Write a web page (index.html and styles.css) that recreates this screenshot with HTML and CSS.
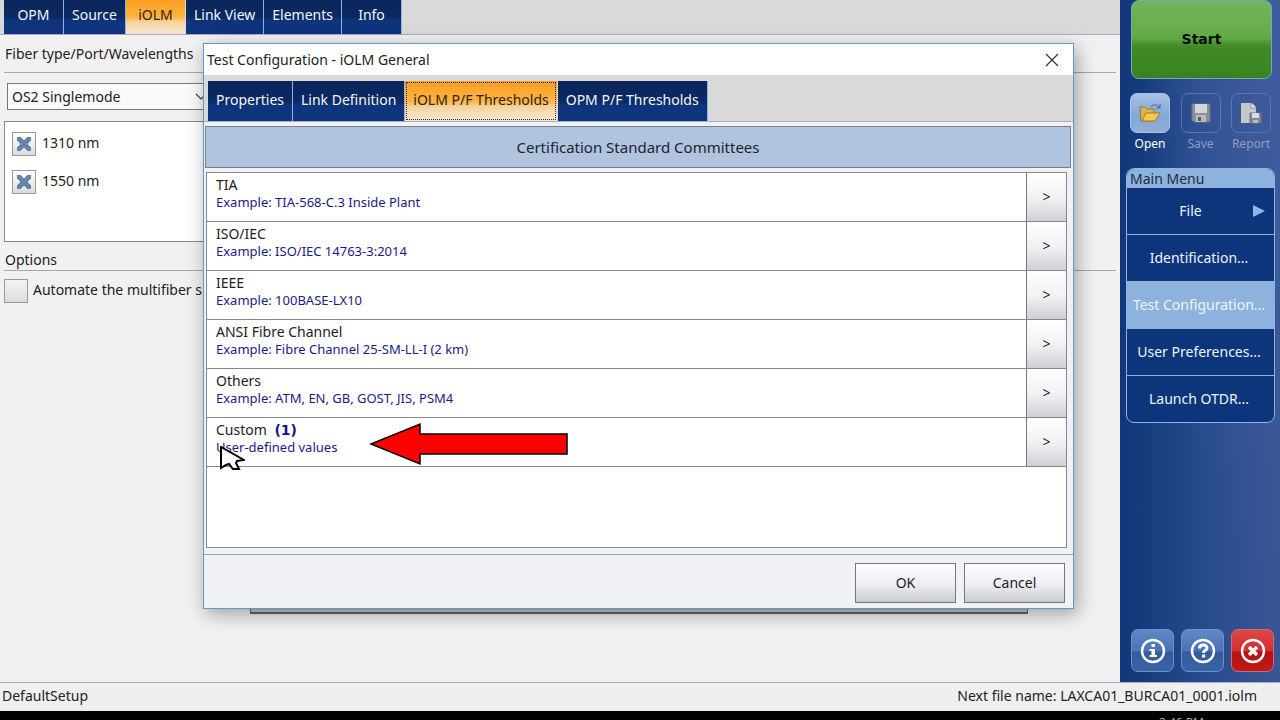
FILE: index.html
```
<!DOCTYPE html>
<html lang="en">
<head>
<meta charset="utf-8">
<title>iOLM Test Configuration</title>
<link rel="stylesheet" href="styles.css">
</head>
<body>
<div class="app">
  <main class="workspace">
    <nav class="tabs tabs-main">
      <button class="tab">OPM</button>
      <button class="tab">Source</button>
      <button class="tab active">iOLM</button>
      <button class="tab">Link View</button>
      <button class="tab">Elements</button>
      <button class="tab">Info</button>
    </nav>
    <section class="panel">
      <h2 class="group-title">Fiber type/Port/Wavelengths</h2>
      <div class="fiber-column">
        <div class="select-wrap">
          <select class="fiber-select" aria-label="Fiber type"><option>OS2 Singlemode</option></select>
          <svg class="chevron" width="12" height="8" viewBox="0 0 12 8"><path d="m1 1 5 5 5-5" fill="none" stroke="#444" stroke-width="1.200"/></svg>
        </div>
        <div class="wavelengths">
          <label class="wave"><input type="checkbox" class="check" checked><span>1310 nm</span></label>
          <label class="wave"><input type="checkbox" class="check" checked><span>1550 nm</span></label>
        </div>
      </div>
      <h2 class="group-title">Options</h2>
      <label class="option"><input type="checkbox" class="check"><span>Automate the multifiber s</span></label>
    </section>
    <div class="back-panel"></div>
  </main>

  <aside class="sidebar">
    <button class="start">Start</button>
    <div class="tools">
      <button class="tool enabled">
        <span class="tool-face"><svg width="24" height="24" viewBox="0 0 24 24">
          <path d="M2 6h5l2 2h7v12H3z" fill="#d9b457" stroke="#9a7526"/>
          <path d="M4 20 8 12h14l-5 8z" fill="#fcc750" stroke="#a97a20"/>
          <path d="M13 6c2-3 6-3 8 0M22 3v4h-4" fill="none" stroke="#47698f" stroke-width="1.200"/>
        </svg></span><span>Open</span>
      </button>
      <button class="tool" disabled>
        <span class="tool-face"><svg width="24" height="24" viewBox="0 0 24 24">
          <path d="M3 3h18v18H5l-2-2z" fill="#8b919b" stroke="#6e7481"/>
          <path d="M6 3h12v9H6z" fill="#d4d7da"/><path d="M7 14h10v7H7z" fill="#b9bdc3"/><path d="M9 16h3v4H9z" fill="#555c69"/>
        </svg></span><span>Save</span>
      </button>
      <button class="tool" disabled>
        <span class="tool-face"><svg width="24" height="24" viewBox="0 0 24 24">
          <path d="M2 2h11l4 4v16H2z" fill="#c4c7cb"/><path d="M12 2v5h5" fill="#e8e8e8" stroke="#8c929b"/>
          <path d="M11 12h11v10H11z" fill="#818894" stroke="#6a7180"/><path d="M13 12h7v5h-7z" fill="#d9dbde"/><path d="M14 19h5v3h-5z" fill="#b9bdc3"/>
        </svg></span><span>Report</span>
      </button>
    </div>
    <nav class="menu">
      <h2 class="menu-title">Main Menu</h2>
      <button class="menu-item">File
        <svg class="menu-arrow" width="13" height="12" viewBox="0 0 13 12"><path d="M1 0 13 6 1 12z" fill="#8db4e2"/></svg>
      </button>
      <button class="menu-item">Identification...</button>
      <button class="menu-item selected">Test Configuration...</button>
      <button class="menu-item">User Preferences...</button>
      <button class="menu-item">Launch OTDR...</button>
    </nav>
    <div class="system">
      <button class="sys" aria-label="About"><svg width="28" height="28" viewBox="0 0 28 28"><circle cx="14" cy="14" r="11" fill="none" stroke="#fff" stroke-width="2.400"/><path d="M12.500 7h3.500v3h-3.500zM10.500 12h5.500v6h2v2h-7.500v-2h2v-4h-2z" fill="#fff"/></svg></button>
      <button class="sys" aria-label="Help"><svg width="28" height="28" viewBox="0 0 28 28"><circle cx="14" cy="14" r="11" fill="none" stroke="#fff" stroke-width="2.400"/><path d="M10.500 11.500c0-4.500 7.500-4.500 7.500-.5 0 2.500-3.500 2-3.500 5" fill="none" stroke="#fff" stroke-width="3"/><path d="M13 17.500h3.200v3H13z" fill="#fff"/></svg></button>
      <button class="sys exit" aria-label="Exit"><svg width="28" height="28" viewBox="0 0 28 28"><circle cx="14" cy="14" r="11" fill="none" stroke="#fff" stroke-width="2.400"/><path d="m10 10 8 8m0-8-8 8" stroke="#fff" stroke-width="3.400"/></svg></button>
    </div>
  </aside>

  <footer class="status"><span>DefaultSetup</span><span>Next file name: LAXCA01_BURCA01_0001.iolm</span></footer>
  <div class="taskbar"><span>3:46 PM</span></div>

  <section class="dialog" role="dialog" aria-label="Test Configuration - iOLM General">
    <header class="dialog-head">
      <h1 class="dialog-title">Test Configuration - iOLM General</h1>
      <button class="close" aria-label="Close"><svg width="14" height="14" viewBox="0 0 14 14"><path d="m1 1 12 12m0-12L1 13" stroke="#333" stroke-width="1.200"/></svg></button>
    </header>
    <nav class="tabs tabs-dialog">
      <button class="tab">Properties</button>
      <button class="tab">Link Definition</button>
      <button class="tab active">iOLM P/F Thresholds</button>
      <button class="tab">OPM P/F Thresholds</button>
    </nav>
    <div class="dialog-body">
      <h2 class="banner">Certification Standard Committees</h2>
      <ul class="list">
        <li class="row"><div class="row-text"><div class="name">TIA</div><div class="example">Example: TIA-568-C.3 Inside Plant</div></div><button class="go" aria-label="Open TIA">&gt;</button></li>
        <li class="row"><div class="row-text"><div class="name">ISO/IEC</div><div class="example">Example: ISO/IEC 14763-3:2014</div></div><button class="go" aria-label="Open ISO/IEC">&gt;</button></li>
        <li class="row"><div class="row-text"><div class="name">IEEE</div><div class="example">Example: 100BASE-LX10</div></div><button class="go" aria-label="Open IEEE">&gt;</button></li>
        <li class="row"><div class="row-text"><div class="name">ANSI Fibre Channel</div><div class="example">Example: Fibre Channel 25-SM-LL-I (2 km)</div></div><button class="go" aria-label="Open ANSI Fibre Channel">&gt;</button></li>
        <li class="row"><div class="row-text"><div class="name">Others</div><div class="example">Example: ATM, EN, GB, GOST, JIS, PSM4</div></div><button class="go" aria-label="Open Others">&gt;</button></li>
        <li class="row"><div class="row-text"><div class="name">Custom <b class="count">(1)</b></div><div class="example">User-defined values</div></div><button class="go" aria-label="Open Custom">&gt;</button>
          <svg class="callout" width="202" height="44" viewBox="0 0 202 44"><path d="M2 22 51 2v10h147v20H51v10z" fill="#f00" stroke="#000" stroke-width="1.500"/></svg>
          <svg class="pointer" width="26" height="26" viewBox="0 0 26 26"><path d="M2 1v21l5-3 3-1 4 5h6l-3-6 1-2 7-1z" fill="#fff" stroke="#000" stroke-width="2"/></svg>
        </li>
      </ul>
    </div>
    <footer class="dialog-foot"><button class="action">OK</button><button class="action">Cancel</button></footer>
  </section>
</div>
</body>
</html>
```
FILE: styles.css
```
* { box-sizing: border-box; }
body { margin: 0; font-family: "Noto Sans", "Open Sans", sans-serif; font-size: 14px; line-height: 18px; color: #222; }
h1, h2, ul { margin: 0; padding: 0; font-size: inherit; font-weight: normal; }
button { font: inherit; color: inherit; margin: 0; padding: 0; border: 0; background: none; }
svg { display: block; }

.app { position: relative; display: grid; grid-template-columns: 1fr 160px; grid-template-rows: 1fr auto auto; height: 100vh; overflow: hidden; background: #f2f1f2; }
.workspace { position: relative; min-width: 0; }

.tabs { display: flex; gap: 1px; background: #d9d9d9; border-bottom: 1px solid #a9a8cc; white-space: nowrap; }
.tabs-main { height: 35px; padding-left: 4px; }
.tab { min-width: 59px; padding: 0 8px 2px; color: #f4f6fb; background: linear-gradient(#0a255a, #0b2962 50%, #0e347c 60%, #0e357e); box-shadow: 1px 0 #8db4e2; }
.tab.active { color: #33220f; background: linear-gradient(#fb9d1f, #fdb444 50%, #f6d3a0 65%, #f4e6d3); box-shadow: none; }
.tabs-main .tab { padding-bottom: 4px; }

.panel { padding: 0 4px; }
.group-title { height: 38px; padding: 10px 1px 0; border-bottom: 1px solid #a8a8a8; }
.fiber-column { width: 240px; padding-top: 10px; }
.select-wrap { position: relative; width: 204px; margin-left: 3px; }
.fiber-select { appearance: none; display: block; width: 100%; height: 27px; padding: 0 4px; border: 1px solid #777; border-radius: 0; background: #fafafa; font: inherit; color: inherit; }
.chevron { position: absolute; right: 4px; top: 10px; }
.wavelengths { height: 121px; margin-top: 11px; padding: 10px 7px; border: 1px solid #888; background: #fff; }
.wave { display: flex; gap: 6px; height: 38px; }
.wave span { padding-top: 2px; }
.option { display: flex; gap: 5px; padding-top: 8px; }
.option span { padding-top: 2px; }
.check { appearance: none; flex: none; width: 24px; height: 24px; margin: 0; border: 1px solid #999; background: linear-gradient(#fff, #dcdcdf); }
.option .check { background: linear-gradient(#f4f4f4, #dcdcdc); }
.check:checked { display: grid; place-items: center; }
.check:checked::before { content: ""; width: 14px; height: 14px; background: linear-gradient(45deg, transparent 38%, #6586a8 38% 62%, transparent 62%), linear-gradient(-45deg, transparent 38%, #6586a8 38% 62%, transparent 62%); }
.fiber-column + .group-title { height: 29px; padding-top: 9px; }
.back-panel { position: absolute; left: 250px; right: 92px; bottom: 68px; height: 60px; background: #c9c9c9; border: 1px solid #666; border-bottom-width: 2px; }

.sidebar { display: flex; flex-direction: column; padding: 0 5px 10px 6px; background: radial-gradient(ellipse at 100% 0, #3f5d9e, transparent 60%), linear-gradient(90deg, #103779, #274a8c 50%, #3b5694); }
.start { height: 79px; margin: 0 3px 0 5px; padding-bottom: 2px; border: 1px solid #76a8bd; border-radius: 8px; background: linear-gradient(#73b65a, #62a948 48%, #438c27 58%, #36831d); color: #050d04; font-family: "DejaVu Sans", sans-serif; font-weight: bold; }
.tools { display: flex; justify-content: space-between; gap: 4px; margin: 14px 1px 0; font-size: 12px; }
.tool { display: flex; flex-direction: column; align-items: center; gap: 2px; width: 46px; color: #8e9fbe; }
.tool-face { display: grid; place-items: center; width: 40px; height: 40px; border: 1px solid #5877b1; border-radius: 7px; }
.enabled { color: #fff; }
.enabled .tool-face { border-color: #a8c4e8; background: linear-gradient(#a5c1e8, #82a8da 60%, #91aed6); }
.menu { margin-top: 15px; overflow: hidden; border: 1px solid #8db4e2; border-radius: 8px; background: #0d357c; }
.menu-title { height: 19px; padding-left: 3px; background: #8db2dd; color: #1c2c44; line-height: 19px; }
.menu-item { position: relative; display: block; width: 100%; height: 47px; padding-right: 3px; border-bottom: 1px solid #8db4e2; color: #edf3fc; white-space: nowrap; }
.menu-item:last-child { height: 46px; border-bottom: 0; }
.menu-item.selected { background: #8db2dd; }
.menu-arrow { position: absolute; right: 9px; top: 17px; }
.menu-item:first-of-type { padding-right: 20px; }
.system { display: flex; justify-content: space-between; margin-top: auto; padding: 0 1px 0 5px; }
.sys { display: grid; place-items: center; width: 43px; height: 43px; border: 1px solid #6c91c9; border-radius: 7px; background: linear-gradient(#6188c7, #4b73b5 50%, #345b9f 55%, #3a63a8); }
.exit { border-color: #c86c80; background: linear-gradient(#de4744, #d13030 50%, #b41212 55%, #c01918); }

.status { grid-column: 1 / -1; display: flex; justify-content: space-between; height: 29px; padding: 4px 23px 0 2px; border-top: 1px solid #aaaec4; background: #efefef; }
.taskbar { grid-column: 1 / -1; display: flex; justify-content: flex-end; height: 9px; padding: 3px 76px 0 0; overflow: hidden; background: #000; color: #aaa; font-size: 12px; }

.dialog { position: absolute; left: 203px; right: 206px; top: 43px; border: 1px solid #5a9bcb; background: #f0f1f4; box-shadow: 3px 5px 18px rgba(0, 0, 0, .35); }
.dialog-head { display: flex; justify-content: space-between; align-items: center; height: 31px; padding: 0 14px 0 3px; background: #fff; }
.tabs-dialog { height: 47px; padding: 6px 4px 0; }
.tabs-dialog .tab.active { outline: 1px dotted #333; outline-offset: -2px; }
.dialog-body { padding: 4px 2px 6px 1px; border-bottom: 1px solid #9aa4b4; }
.banner { height: 42px; border: 1px solid #777f8c; background: #b0c3df; color: #1d2430; font-size: 15px; line-height: 41px; text-align: center; }
.list { min-height: 376px; margin: 4px 4px 0 1px; border: 1px solid #888; background: #fff; list-style: none; }
.row { position: relative; display: flex; height: 49px; border-bottom: 1px solid #888; }
.row-text { flex: 1; padding: 3px 9px; }
.name { line-height: 18px; }
.example { color: #1a1a87; font-size: 13px; line-height: 17px; }
.count { margin-left: 4px; color: #14148c; font-family: "DejaVu Sans", sans-serif; }
.go { width: 40px; border-left: 1px solid #777; background: linear-gradient(#fff, #f2f2f6 50%, #cfcfd6); }
.callout { position: absolute; left: 162px; top: 4px; }
.pointer { position: absolute; left: 12px; top: 28px; }
.dialog-foot { display: flex; justify-content: flex-end; gap: 8px; padding: 8px 8px 5px; }
.action { width: 101px; height: 40px; border: 1px solid #777; background: linear-gradient(#fcfcff, #ededf3 55%, #c9c9d0); }
```
